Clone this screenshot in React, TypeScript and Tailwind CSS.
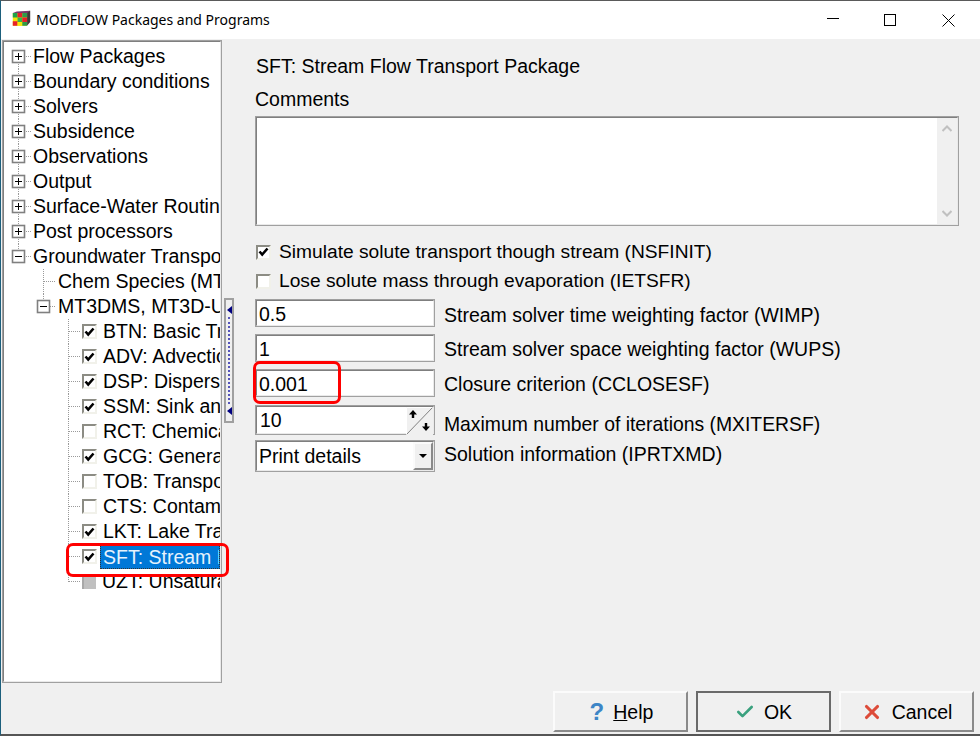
import { Check, X } from "lucide-react";

type Row = {
  label: string;
  kind: "plus" | "minus" | "leaf" | "group" | "check" | "empty" | "grey";
  selected?: boolean;
  last?: boolean;
};

const ROWS: Row[] = [
  { label: "Flow Packages", kind: "plus" },
  { label: "Boundary conditions", kind: "plus" },
  { label: "Solvers", kind: "plus" },
  { label: "Subsidence", kind: "plus" },
  { label: "Observations", kind: "plus" },
  { label: "Output", kind: "plus" },
  { label: "Surface-Water Routing", kind: "plus" },
  { label: "Post processors", kind: "plus" },
  { label: "Groundwater Transport", kind: "minus" },
  { label: "Chem Species (MT3DMS)", kind: "leaf" },
  { label: "MT3DMS, MT3D-USGS", kind: "group" },
  { label: "BTN: Basic Transport", kind: "check" },
  { label: "ADV: Advection", kind: "check" },
  { label: "DSP: Dispersion", kind: "check" },
  { label: "SSM: Sink and Source", kind: "check" },
  { label: "RCT: Chemical Reactions", kind: "empty" },
  { label: "GCG: Generalized Conjugate", kind: "check" },
  { label: "TOB: Transport Observations", kind: "empty" },
  { label: "CTS: Contaminant Treatment", kind: "empty" },
  { label: "LKT: Lake Transport", kind: "check" },
  { label: "SFT: Stream Flow", kind: "check", selected: true },
  { label: "UZT: Unsaturated Zone", kind: "grey", last: true },
];

const DOTS = "#9a9a9a";

function CheckBox({ state }: { state: "check" | "empty" | "grey" }) {
  if (state === "grey") return <div className="w-[14px] h-[14px] bg-[#c0c0c0] border-l-2 border-[#a8a8a8]" />;
  return (
    <div className="w-[15px] h-[15px] bg-white border-2 border-t-[#8c8c84] border-l-[#8c8c84] border-r-[#f1f1ea] border-b-[#f1f1ea] flex items-center justify-center">
      {state === "check" && (
        <svg width="11" height="10" viewBox="0 0 11 10" fill="none">
          <path d="M1.5 4.5 L4.2 7.5 L9.5 1.5" stroke="black" strokeWidth="2.6" />
        </svg>
      )}
    </div>
  );
}

function Expander({ x, minus }: { x: number; minus: boolean }) {
  return (
    <>
      <rect x={x - 5.5} y="6.5" width="12" height="12" fill="white" stroke="#808080" strokeWidth="1.6" />
      <line x1={x - 3} y1="12.5" x2={x + 4} y2="12.5" stroke="black" />
      {!minus && <line x1={x + 0.5} y1="9" x2={x + 0.5} y2="16" stroke="black" />}
    </>
  );
}

// tree connector lines, drawn per row; x values are relative to the inner panel edge
function Gutter({ row, index }: { row: Row; index: number }) {
  const isRoot = index <= 8;
  const isL1 = index === 9 || index === 10;
  const width = isRoot ? 27 : isL1 ? 52 : 76;
  const dash = { stroke: DOTS, strokeDasharray: "1 1" };
  return (
    <svg width={width} height="25" className="shrink-0">
      {/* root level trunk */}
      {isRoot && <line x1="14.5" y1={index === 0 ? 12 : 0} x2="14.5" y2={index === 8 ? 6 : 25} {...dash} />}
      {isRoot && <line x1="20" y1="12.5" x2="27" y2="12.5" {...dash} />}
      {isRoot && <Expander x={14} minus={row.kind === "minus"} />}
      {/* second level */}
      {isL1 && <line x1="39.5" y1="0" x2="39.5" y2={index === 10 ? 6 : 25} {...dash} />}
      {isL1 && <line x1="40" y1="12.5" x2="52" y2="12.5" {...dash} />}
      {row.kind === "group" && <Expander x={39} minus />}
      {/* third level */}
      {index > 10 && <line x1="64.5" y1="0" x2="64.5" y2={row.last ? 13 : 25} {...dash} />}
      {index > 10 && <line x1="65" y1="12.5" x2="76" y2="12.5" {...dash} />}
    </svg>
  );
}

function TreeRow({ row, index }: { row: Row; index: number }) {
  const hasBox = row.kind === "check" || row.kind === "empty" || row.kind === "grey";
  return (
    <div className="h-[25px] flex items-center whitespace-nowrap overflow-hidden">
      <Gutter row={row} index={index} />
      {hasBox && (
        <div className="mr-[6px] ml-[2px] shrink-0">
          <CheckBox state={row.kind as "check" | "empty" | "grey"} />
        </div>
      )}
      <span
        className={
          row.selected
            ? "h-[24px] flex-1 leading-[22px] -ml-[3px] pl-[2px] bg-[#0078d7] text-[#e6f2fc] border border-dotted border-[#333] overflow-hidden"
            : "leading-[25px] " + (index > 10 ? "" : "pl-[2px]")
        }
      >
        {row.label}
      </span>
    </div>
  );
}

function Sunken({ className, children }: { className: string; children?: React.ReactNode }) {
  return (
    <div className={"border border-[#a0a0a0] bg-white " + className}>
      <div className="h-full w-full border border-t-[#7f7f7f] border-l-[#7f7f7f] border-r-[#eaeaea] border-b-[#eaeaea] flex">
        {children}
      </div>
    </div>
  );
}

function Btn({ className, children }: { className: string; children: React.ReactNode }) {
  return (
    <div
      className={
        "w-[135px] h-[41px] bg-[#f0f0f0] flex items-center justify-center gap-[9px] border-2 border-t-[#fbfbfb] border-l-[#fbfbfb] border-r-[#8a8a8a] border-b-[#8a8a8a] " +
        className
      }
    >
      {children}
    </div>
  );
}

export default function App() {
  return (
    <div className="relative w-[980px] h-[736px] overflow-hidden bg-[#f0f0f0] border-l border-l-[#1c5f7c] border-t border-t-[#5a5a5a] border-b-2 border-b-[#555] font-['Liberation_Sans',Arial,sans-serif] text-[19.5px] leading-[24px] text-black flex flex-col">
      {/* title bar */}
      <div className="h-[38px] shrink-0 bg-white flex items-center pl-[11px] font-['Noto_Sans',sans-serif] text-[14px]">
        <svg width="19" height="18" viewBox="0 0 24 24" className="mr-[5px] -mt-[2px]" preserveAspectRatio="none">
          <path d="M19 2 L23 1 L23 16 L19 21 Z" fill="#403a3a" />
          <path d="M1 4 L6 2 L23 1 L19 4 Z" fill="#7a3b6a" />
          <rect x="1" y="4" width="18" height="17" fill="#f5e60a" />
          <rect x="1" y="4" width="6" height="6" fill="#1fa34a" />
          <rect x="7" y="4" width="6" height="6" fill="#e8202a" />
          <rect x="13" y="4" width="6" height="6" fill="#2f9b4a" />
          <rect x="7" y="10" width="6" height="6" fill="#3cb04a" />
          <rect x="1" y="15" width="6" height="6" fill="#e8202a" />
          <rect x="13" y="10" width="6" height="6" fill="#e8202a" />
          <rect x="7" y="16" width="6" height="5" fill="#f5e60a" />
          <rect x="13" y="16" width="6" height="5" fill="#2f9b4a" />
        </svg>
        <span>MODFLOW Packages and Programs</span>
        <div className="ml-auto flex items-center">
          <div className="w-[58px] flex justify-center">
            <div className="w-[12px] h-px bg-black -mt-[2px]" />
          </div>
          <div className="w-[58px] flex justify-center pr-[2px]">
            <div className="w-[12px] h-[12px] border border-black" />
          </div>
          <div className="w-[60px] flex justify-center pr-[4px]">
            <svg width="13" height="13" viewBox="0 0 13 13" stroke="black">
              <path d="M0.5 0.5 L12.5 12.5 M12.5 0.5 L0.5 12.5" />
            </svg>
          </div>
        </div>
      </div>

      <div className="flex h-[643px] shrink-0 mt-px">
        {/* tree panel */}
        <Sunken className="ml-px w-[220px] h-full shrink-0">
          <div className="flex-1 min-w-0 pt-[2px]">
            {ROWS.map((row, i) => (
              <TreeRow key={row.label} row={row} index={i} />
            ))}
          </div>
        </Sunken>

        {/* splitter */}
        <div className="ml-[2px] mt-[258px] w-[10px] h-[125px] shrink-0 border-2 border-[#a0a0a0] flex flex-col items-center justify-between py-[6px]">
          <svg width="5" height="8" viewBox="0 0 5 8" fill="#000080"><path d="M5 0 L0 4 L5 8 Z" /></svg>
          <div className="flex-1 my-[3px] w-px border-l-2 border-dotted border-[#5555bb]" />
          <svg width="5" height="8" viewBox="0 0 5 8" fill="#000080"><path d="M5 0 L0 4 L5 8 Z" /></svg>
        </div>

        {/* package form */}
        <div className="ml-[21px] flex flex-col pt-[14px]">
          <div className="h-[24px] pl-px">SFT: Stream Flow Transport Package</div>
          <div className="h-[24px] mt-[9px]">Comments</div>
          <Sunken className="w-[704px] h-[110px] mt-[5px]">
            <div className="flex-1" />
            <div className="w-[20px] bg-[#f0f0f0] flex flex-col items-center justify-between py-[7px]">
              <svg width="10" height="7" viewBox="0 0 10 7" fill="none" stroke="#c0c0c0" strokeWidth="2"><path d="M0.5 6 L5 1.5 L9.5 6" /></svg>
              <svg width="10" height="7" viewBox="0 0 10 7" fill="none" stroke="#c0c0c0" strokeWidth="2"><path d="M0.5 1 L5 5.5 L9.5 1" /></svg>
            </div>
          </Sunken>

          <div className="h-[24px] mt-[14px] flex items-center gap-[8px] pl-px text-[19.2px]">
            <CheckBox state="check" />
            <span>Simulate solute transport though stream (NSFINIT)</span>
          </div>
          <div className="h-[24px] mt-[5px] flex items-center gap-[8px] pl-px text-[19.2px]">
            <CheckBox state="empty" />
            <span>Lose solute mass through evaporation (IETSFR)</span>
          </div>

          <div className="mt-[6px] h-[28px] flex items-center gap-[9px]">
            <Sunken className="w-[180px] h-[28px]"><span className="pl-[2px] leading-[27px]">0.5</span></Sunken>
            <span className="pt-[3px]">Stream solver time weighting factor (WIMP)</span>
          </div>
          <div className="mt-[7px] h-[28px] flex items-center gap-[9px]">
            <Sunken className="w-[180px] h-[28px]"><span className="pl-[2px] leading-[27px]">1</span></Sunken>
            <span className="pt-[2px]">Stream solver space weighting factor (WUPS)</span>
          </div>
          <div className="mt-[7px] h-[28px] flex items-center gap-[9px]">
            <Sunken className="w-[180px] h-[28px]"><span className="pl-[2px] leading-[27px]">0.001</span></Sunken>
            <span className="pt-[2px]">Closure criterion (CCLOSESF)</span>
          </div>
          <div className="mt-[8px] h-[30px] flex items-center gap-[9px]">
            <Sunken className="w-[180px] h-[30px]">
              <span className="pl-[3px] flex-1 leading-[27px]">10</span>
              <svg width="27" height="28" viewBox="0 0 27 28" className="shrink-0 bg-[#f0f0f0]">
                <path d="M0.5 27.5 L26.5 0.5" stroke="#808080" fill="none" />
                <path d="M0.5 27.5 L0.5 0.5 L26.5 0.5" stroke="#fff" fill="none" />
                <path d="M7 3 L11 7.5 L8.2 7.5 L8.2 11 L5.8 11 L5.8 7.5 L3 7.5 Z" fill="black" />
                <path d="M20 24 L24 19.5 L21.2 19.5 L21.2 16 L18.8 16 L18.8 19.5 L16 19.5 Z" fill="black" />
              </svg>
            </Sunken>
            <span className="pt-[8px] text-[19.35px]">Maximum number of iterations (MXITERSF)</span>
          </div>
          <div className="mt-[5px] h-[32px] flex items-center gap-[9px]">
            <Sunken className="w-[180px] h-[32px]">
              <span className="pl-[2px] flex-1 leading-[29px]">Print details</span>
              <div className="w-[20px] h-full bg-[#f0f0f0] border-2 border-t-[#fbfbfb] border-l-[#fbfbfb] border-r-[#8a8a8a] border-b-[#8a8a8a] flex items-center justify-center">
                <svg width="8" height="4" viewBox="0 0 8 4" fill="black"><path d="M0 0 L8 0 L4 4 Z" /></svg>
              </div>
            </Sunken>
            <span className="pb-[4px]">Solution information (IPRTXMD)</span>
          </div>
        </div>
      </div>

      {/* dialog buttons */}
      <div className="flex justify-end gap-[8px] pr-[6px] mt-[8px]">
        <Btn className="pl-[2px]">
          <span className="text-[#3d85c6] font-bold text-[24px] leading-none">?</span>
          <span><u>H</u>elp</span>
        </Btn>
        <Btn className="outline-2 -outline-offset-2 outline-[#6a6a6a]">
          <Check size={20} strokeWidth={3.2} className="text-[#3aa17e]" />
          <span>OK</span>
        </Btn>
        <Btn className="">
          <X size={22} strokeWidth={3.4} className="text-[#dd4b39]" />
          <span>Cancel</span>
        </Btn>
      </div>

      {/* red annotation marks on the screenshot */}
      <div className="absolute left-[65px] top-[542px] w-[163px] h-[34px] border-[3px] border-[#ff0000] rounded-[7px]" />
      <div className="absolute left-[252px] top-[360px] w-[88px] h-[43px] border-[3px] border-[#ff0000] rounded-[7px]" />
    </div>
  );
}
